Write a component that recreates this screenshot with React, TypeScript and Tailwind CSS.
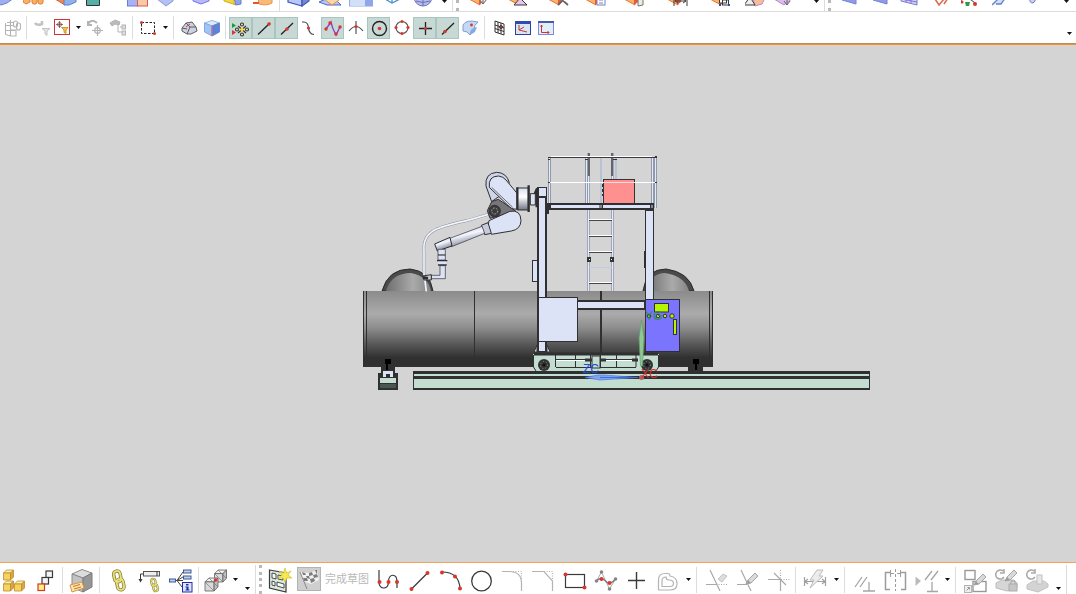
import type { ReactNode } from "react";
import clsx from "clsx";

type Tool = {
  label: string;
  art: ReactNode;
  active?: boolean;
  width?: string;
};

const INK = "#3a3a3c";
const DIM = "#b4b4b4";
const RED = "#d8362f";
const PLATE = "#dde3f7";
const MINT = "#c4ddd1";

function Dot({ x, y, r = 2, fill = RED }: { x: number; y: number; r?: number; fill?: string }) {
  return <circle cx={x} cy={y} r={r} fill={fill} />;
}

type CubeProps = { x: number; y: number; s: number; top: string; left: string; right: string; line: string };

function Cube({ x, y, s, top, left, right, line }: CubeProps) {
  const d = s * 0.3;
  return (
    <g stroke={line} strokeWidth="0.8" strokeLinejoin="round">
      <path d={`M${x} ${y + d}L${x + d} ${y}H${x + s}L${x + s - d} ${y + d}Z`} fill={top} />
      <path d={`M${x} ${y + d}H${x + s - d}V${y + s}H${x}Z`} fill={left} />
      <path d={`M${x + s - d} ${y + d}L${x + s} ${y}V${y + s - d}L${x + s - d} ${y + s}Z`} fill={right} />
    </g>
  );
}

function Chain({ x, y, k = 1 }: { x: number; y: number; k?: number }) {
  return (
    <g transform={`translate(${x} ${y}) scale(${k})`} fill="none">
      <g stroke="#85803a" strokeWidth="3.4">
        <rect x="2" y="2" width="6.500" height="11" rx="3.200" transform="rotate(-12 5 7)" />
        <rect x="5" y="10" width="6.500" height="11" rx="3.200" transform="rotate(-12 8 15)" />
      </g>
      <g stroke="#e9e07a" strokeWidth="1.8">
        <rect x="2" y="2" width="6.500" height="11" rx="3.200" transform="rotate(-12 5 7)" />
        <rect x="5" y="10" width="6.500" height="11" rx="3.200" transform="rotate(-12 8 15)" />
      </g>
    </g>
  );
}

function Pencil({ x, y }: { x: number; y: number }) {
  return (
    <g transform={`translate(${x} ${y})`}>
      <path d="M0 11L2 7L9 0L12 3L5 10Z" fill="#d9d9d9" stroke="#a6a6a6" />
      <path d="M0 11L2 7L5 10Z" fill="#9d9d9d" />
    </g>
  );
}

/* clipped upper row: only the bottom edges of the icons are drawn */

const slab = (extra: ReactNode) => (
  <>
    <path d="M2 -1L13 5V-3H2Z" fill="#fbb55e" stroke="#ea7040" />
    <path d="M12 5L16 2V-2H12Z" fill="#e9573f" />
    {extra}
  </>
);

const sheet = <path d="M5 -4H19V4L5 0Z" fill="#8f9bea" stroke="#7480d8" />;

const upperA: Tool[] = [
  { label: "Extrude", art: <path d="M1 -2H22L15 3L9 5L1 1Z" fill="#9fb0ee" stroke="#6e7cd0" /> },
  {
    label: "Pattern",
    art: (
      <g fill="#f7b268" stroke="#e27a33">
        <path d="M0 -2H7V2L3 4L0 2Z" />
        <rect x="9" y="-3" width="5" height="7" rx="2" />
        <rect x="15" y="-3" width="5" height="7" rx="2" />
      </g>
    ),
  },
  {
    label: "Move face",
    art: (
      <>
        <path d="M1 -1H11V5Z" fill="#f08a4a" stroke="#e0562f" />
        <path d="M10 -2H22V2L15 5H10Z" fill="#8fb2ea" stroke="#5f7fd0" />
      </>
    ),
  },
  { label: "Fill surface", art: <path d="M1.500 -2H14.500V5.500H1.500Z" fill="#57b0a4" stroke="#333" /> },
];

const upperB: Tool[] = [
  {
    label: "Trim body",
    art: (
      <>
        <rect x="1.500" y="-3" width="10" height="9" fill="#a9b2f3" stroke="#6d78dc" />
        <rect x="11.500" y="-3" width="10" height="9" fill="#f7c9a9" stroke="#e2574a" />
      </>
    ),
  },
  { label: "Datum plane", art: <path d="M0 -1L8 -4L16 -3V1L9 6Z" fill="#b3c1f2" stroke="#8a98dd" /> },
  { label: "Sew", art: <path d="M5 -2H21V1L13 4L5 1Z" fill="#b5b9f7" stroke="#7378e6" /> },
  {
    label: "Thicken",
    art: (
      <>
        <path d="M5 -2H15V3L17 5L5 1Z" fill="#f1d83f" stroke="#cfae28" />
        <path d="M15 -2H22V4L17 5Z" fill="#8ea4ea" stroke="#6a7ac8" />
      </>
    ),
  },
  {
    label: "Revolve",
    art: (
      <>
        <path d="M8 -2H22V3Q17 6 9 4Z" fill="#f9b978" stroke="#ea9048" />
        <path d="M3 3H9" stroke="#e0562f" strokeWidth="2" />
      </>
    ),
  },
];

const upperC: Tool[] = [
  {
    label: "Block",
    art: (
      <>
        <path d="M1 -4H15V6L1 2Z" fill="#b7c8f4" stroke="#3f57b8" strokeWidth="1.200" />
        <path d="M15 -4H22V1L15 6Z" fill="#7089d4" stroke="#3f57b8" strokeWidth="1.200" />
      </>
    ),
  },
  {
    label: "Sheet",
    art: (
      <>
        <path d="M1 2L8 -1H17L23 5H9Z" fill="#b4c7f3" stroke="#4c68c0" />
        <path d="M6 -1L14 5L21 0L17 -3Z" fill="#fbd6a6" stroke="#ec9148" />
      </>
    ),
  },
  {
    label: "View layout",
    art: (
      <>
        <rect x="0" y="-3" width="24" height="9.500" fill="#8fa6e8" />
        <rect x="1" y="-3" width="15" height="9" fill="#d3def8" />
      </>
    ),
  },
  { label: "Wireframe", art: <path d="M5 -1L12 3L20 -1M12 -2V3" fill="none" stroke="#4e8fcb" strokeWidth="1.300" /> },
  {
    label: "Sphere",
    art: (
      <>
        <circle cx="12" cy="-3" r="9" fill="#b6bdea" stroke="#6570b8" />
        <path d="M12 -3V6M5 1Q12 4 19 1" fill="none" stroke="#6570b8" />
      </>
    ),
  },
];

const upperD: Tool[] = [
  { label: "Offset face", width: "w-[36px]", art: slab(<path d="M12 -1L16 4L20 -1M16 -3V4" stroke="#666" fill="#eee" />) },
  { label: "Draft", width: "w-[42px]", art: slab(<path d="M8 5L14 -2L21 5Z" fill="#e6c5ee" stroke={INK} />) },
  { label: "Delete face", width: "w-[38px]", art: slab(<path d="M12 5L20 -3M14 -2L22 5" stroke="#666" strokeWidth="1.800" />) },
  {
    label: "Copy face",
    width: "w-[35px]",
    art: slab(
      <>
        <rect x="14" y="-3" width="8" height="8" fill="#fff" stroke="#7581c4" />
        <path d="M16 0H20M16 3H20" stroke="#7581c4" />
      </>
    ),
  },
  { label: "Resize face", width: "w-[43px]", art: slab(<path d="M16 -2H21V5L16 6Z" fill="#e7f0df" stroke="#777" />) },
  {
    label: "Linear dimension",
    width: "w-[43px]",
    art: slab(<path d="M9 -2V6M22 -2V6M10 1H21M13 -1L10 1L13 3M18 -1L21 1L18 3" stroke={INK} fill="none" />),
  },
  {
    label: "Make coplanar",
    width: "w-[43px]",
    art: slab(
      <>
        <rect x="11.500" y="-3" width="7" height="6" fill="#fff" stroke={INK} />
        <rect x="14.500" y="0" width="6" height="5" fill="none" stroke={INK} />
        <path d="M11 4H13V6H11ZM20 4H22V6H20Z" fill="#3a46b8" />
      </>
    ),
  },
  {
    label: "Angular",
    width: "w-[31px]",
    art: (
      <>
        <path d="M8 -2H20L17 4L10 6Z" fill="#f4c091" stroke="#c283dc" />
        <path d="M-1 5L5 -3L10 5Z" fill="#eee" stroke={INK} />
      </>
    ),
  },
  {
    label: "Group face",
    width: "w-[28px]",
    art: (
      <>
        <path d="M0 -1L10 5L19 -2Z" fill="#ddbdec" stroke="#b08ac9" />
        <path d="M10 1L13 5L16 1M13 -3V5" stroke="#666" fill="none" />
      </>
    ),
  },
];

const upperE: Tool[] = [
  { label: "Ruled", art: sheet },
  { label: "Through curves", art: sheet },
  {
    label: "Curve mesh",
    art: (
      <>
        <path d="M2 -4H18V5L2 1Z" fill="#d3d0f4" stroke="#7d77d6" />
        <path d="M7 -3V2M12 -3V3M2 -1L18 2" stroke="#7d77d6" />
      </>
    ),
  },
  { label: "Swept", art: <path d="M5 -1L9 5L14 -1M14 4L18 -2" fill="none" stroke="#dd6a52" strokeWidth="1.600" /> },
  {
    label: "Studio surface",
    art: (
      <>
        <path d="M-1 1Q6 -5 14 3" fill="none" stroke={INK} />
        <path d="M4 2L9 2L8 6L5 6Z" fill="#2c9a46" />
        <Dot x={1} y={2} r={1.500} />
        <Dot x={14} y={4} />
      </>
    ),
  },
  { label: "Section", art: <path d="M0 5L8 -3H14L9 4H4" fill="#d4ddf8" stroke="#5c83cd" strokeWidth="1.300" /> },
  { label: "Bridge", art: <path d="M7 -2Q6 3 10 3Q13 2 12 -2" fill="#ced2ef" stroke="#7076b4" /> },
];

const snapLine = <path d="M4 16.500L16 5" stroke="#222" strokeWidth="1.300" />;

const selA: Tool[] = [
  {
    label: "Menu tree",
    art: (
      <g fill="none" stroke={DIM} strokeWidth="1.100">
        <path d="M2.500 5V16.500M7.500 2V18M2.500 7.500H11M2.500 12.500H12M2.500 16.500L7.500 18H13V12H8M4 4.500H11" />
        <rect x="10.500" y="3" width="4" height="6" rx="2" />
        <rect x="13.500" y="5" width="4" height="7" rx="2" />
      </g>
    ),
  },
];

const selB: Tool[] = [
  {
    label: "Filter back",
    art: (
      <>
        <path d="M3 5Q5 8 10 6V3" fill="none" stroke="#c2c2c2" strokeWidth="2.600" />
        <path d="M10 10.500H18L15 13V17.500L13 16V13Z" fill="#e6e6e6" stroke="#c2c2c2" />
      </>
    ),
  },
];

const selC: Tool[] = [
  {
    label: "Undo selection",
    art: (
      <g fill="none" stroke={DIM} strokeWidth="1.200">
        <path d="M2 3V7H6M2 6Q6 0 11 5" strokeWidth="2" />
        <path d="M11.500 7V18M6 12.500H17" />
        <circle cx="11.500" cy="12.500" r="2.800" />
      </g>
    ),
  },
  {
    label: "Assembly path",
    art: (
      <g fill="#ddd" stroke={DIM}>
        <path d="M1 5L6 2L11 4L10 7L6 6L3 8Z" fill="#bbb" />
        <path d="M9 6V14H13M11 9H13" fill="none" />
        <rect x="13" y="7" width="3.500" height="4" />
        <rect x="13" y="13" width="3.500" height="4" />
      </g>
    ),
  },
];

const snaps: Tool[] = [
  {
    label: "Snap points",
    active: true,
    art: (
      <>
        <path d="M1 5L5 7.500L1 10Z" fill="#14a030" />
        <path d="M1 12L5 14.500L1 17Z" fill={RED} />
        <g stroke="#333" strokeWidth="1.100" fill="#e7e7d0">
          <path d="M7 8L15 15M15 8L7 15" />
          <circle cx="11" cy="6.500" r="1.500" />
          <circle cx="11" cy="16.500" r="1.500" />
          <circle cx="6" cy="11.500" r="1.500" />
          <circle cx="16" cy="11.500" r="1.500" />
        </g>
        <path d="M11 8L12 10.500L14.500 11.500L12 12.500L11 15L10 12.500L7.500 11.500L10 10.500Z" fill="#ffd93d" />
      </>
    ),
  },
  { label: "End point", active: true, art: <>{snapLine}<Dot x={15} y={6} r={1.800} /></> },
  { label: "Mid point", active: true, art: <>{snapLine}<Dot x={10} y={11} r={1.800} /></> },
  {
    label: "Control point",
    art: (
      <>
        <path d="M2 4H4Q8 4 8.500 10Q9 16 14 16.500" fill="none" stroke="#444" strokeWidth="1.200" />
        <Dot x={8.500} y={10} r={1.600} />
      </>
    ),
  },
  {
    label: "Intersection spline",
    active: true,
    art: (
      <>
        <path d="M3 11L8 4Q9 10 13 17L17 9" fill="none" stroke="#8b3fc4" strokeWidth="1.400" />
        <Dot x={3} y={11} r={1.700} />
        <Dot x={7} y={5} r={1.700} />
        <Dot x={13} y={16} r={1.700} />
        <Dot x={17} y={9} r={1.700} />
      </>
    ),
  },
  {
    label: "Intersection point",
    art: (
      <>
        <path d="M3 13Q10 4 17 13M10 3V16" fill="none" stroke="#555" strokeWidth="1.200" />
        <Dot x={10} y={8.500} r={1.600} />
      </>
    ),
  },
  {
    label: "Arc center",
    active: true,
    art: (
      <>
        <circle cx="10.500" cy="10.500" r="7" fill="none" stroke="#222" strokeWidth="1.400" />
        <Dot x={10.500} y={10.500} r={1.800} />
      </>
    ),
  },
  {
    label: "Quadrant point",
    art: (
      <>
        <circle cx="10" cy="9.500" r="6" fill="none" stroke="#555" strokeWidth="1.100" />
        <Dot x={10} y={3.500} r={1.600} />
        <Dot x={10} y={15.500} r={1.600} />
        <Dot x={4} y={9.500} r={1.600} />
        <Dot x={16} y={9.500} r={1.600} />
      </>
    ),
  },
  {
    label: "Existing point",
    active: true,
    art: (
      <>
        <path d="M10.500 4V17M4 10.500H17" stroke="#222" strokeWidth="1.300" />
        <Dot x={10.500} y={10.500} r={1.500} />
      </>
    ),
  },
  { label: "Point on curve", active: true, art: <>{snapLine}<Dot x={7} y={13.500} r={1.800} /></> },
  {
    label: "Point on face",
    art: (
      <>
        <path d="M2 7Q5 1 17 4Q13 7 13 11L9 17Q7 13 2 13Z" fill="#c4d7f3" stroke="#7c9fd4" />
        <path d="M9 17Q8 10 16 9L14 14Z" fill="#88aadf" />
        <Dot x={10.500} y={7} r={1.400} />
      </>
    ),
  },
];

const selD: Tool[] = [
  {
    label: "Grid",
    art: (
      <g stroke="#333" fill="none">
        <path d="M5 3L14 6V17L5 14ZM8 4V15M11 5V16M5 7L14 10M5 10.500L14 13.500" />
        <Dot x={11} y={9} r={1.500} />
      </g>
    ),
  },
  {
    label: "WCS dynamics",
    art: (
      <>
        <rect x="2.500" y="3.500" width="15" height="13" fill="#d7e6f2" stroke="#2e3f9f" />
        <path d="M2 3H18V6H2Z" fill="#3349b0" />
        <path d="M6 7V12L14 14M6 12L11 9" fill="none" stroke="#c33" />
      </>
    ),
  },
  {
    label: "WCS orient",
    art: (
      <>
        <rect x="2.500" y="3.500" width="15" height="13" fill="#e2eef6" stroke="#7c88ea" />
        <path d="M2 3H18V5H2Z" fill="#4a58a8" />
        <path d="M5.500 7V14.500H13M4.500 8.500L5.500 7L6.500 8.500M11.500 13L13 14.500L11.500 16" fill="none" stroke="#c33" />
      </>
    ),
  },
];

const gold = { top: "#fdf0a8", left: "#f6d25e", right: "#dba640", line: "#bd8d2e" };
const steel = { top: "#eeeeee", left: "#dadada", right: "#bdbdbd", line: "#5f5f5f" };

const asmA: Tool[] = [
  {
    label: "Assemblies",
    art: (
      <>
        <Cube x={2.500} y={3} s={10} {...gold} />
        <Cube x={2.500} y={14} s={10} {...gold} />
        <Cube x={13.500} y={14} s={10} {...gold} />
      </>
    ),
  },
  {
    label: "Exploded view",
    art: (
      <g fill="#f4f4f4" stroke={INK} strokeWidth="1.200">
        <rect x="14" y="4" width="6.500" height="6.500" />
        <rect x="10" y="10.500" width="6.500" height="6.500" />
        <rect x="6" y="17" width="6.500" height="6.500" fill="#fff27a" stroke={RED} />
      </g>
    ),
  },
];

const asmB: Tool[] = [
  {
    label: "Part properties",
    art: (
      <>
        <path d="M3 7L13 2.500L23 6L14 11Z" fill="#dcdcdc" stroke="#8c8c8c" />
        <path d="M3 7L14 11V25L3 20Z" fill="#c3c3c3" stroke="#8c8c8c" />
        <path d="M14 11L23 6V20L14 25Z" fill="#969696" stroke="#7b7b7b" />
        <path d="M1 18L13 15L15 21L3 25Z" fill="#fde3ae" stroke="#d9973f" />
        <path d="M4 19.500L11 17.500M5 22L12 20" stroke="#c6792b" />
      </>
    ),
  },
];

const asmC: Tool[] = [
  { label: "Constraints", art: <Chain x={6} y={2} /> },
  {
    label: "Arrangement link",
    art: (
      <>
        <rect x="6.500" y="4.500" width="16" height="4.500" fill="#eee" stroke="#555" />
        <path d="M20 4V9M6 7H3.500V14" fill="none" stroke={INK} />
        <path d="M1.500 12H5.500L3.500 15.500Z" fill={INK} />
        <Chain x={13} y={10.500} k={0.650} />
      </>
    ),
  },
  {
    label: "Relations browser",
    art: (
      <>
        <path d="M7 13.500H9L15 5M9 13.500L15 10M9 13.500L14 20M9 13.500H15" stroke="#444" fill="none" />
        <g fill="#b8cff2" stroke="#44598c">
          <rect x="1.500" y="12" width="6" height="3" />
          <rect x="15.500" y="3" width="7.500" height="3" />
          <rect x="15.500" y="9" width="7.500" height="3" />
        </g>
        <rect x="14.500" y="15.500" width="9.500" height="9.500" fill="#dfe4ff" stroke="#1f2ca8" />
        <path d="M18 17H20.500V18.500H18ZM17.500 19.500H20.500V22.500H21.500V23.500H17.500V22.500H18.500V20.500H17.500Z" fill="#1f2ca8" />
      </>
    ),
  },
];

const asmD: Tool[] = [
  {
    label: "Interference",
    width: "w-[27px]",
    art: (
      <>
        <Cube x={11.500} y={3} s={12} {...steel} />
        <Cube x={2} y={11} s={13} {...steel} />
        <path d="M2 15L11 24M6 11L15 20M12 7L20 15M15 3L23 11" stroke="#777" strokeWidth="0.700" />
        <Dot x={12.500} y={13} r={1.800} />
      </>
    ),
  },
];

const sketchIcon: Tool[] = [
  {
    label: "Sketch",
    art: (
      <>
        <path d="M2.500 3L19 6V25L2.500 21Z" fill="#dce9dd" stroke={INK} strokeWidth="1.200" />
        <path
          d="M5 6L9 7V12L5 11ZM11 8L16 9V13L11 12ZM5 14L8 15V19L5 18ZM10 15L17 17V21L10 19Z"
          fill="#f5faf5"
          stroke={INK}
          strokeWidth="0.900"
        />
        <path
          d="M18 1L19.500 6L24 4L21 8L25 11L20 11L18 15L16 11L11 11L15 8L12 4L16.500 6Z"
          fill="#f6e84e"
          stroke="#c9b92e"
          strokeWidth="0.600"
        />
      </>
    ),
  },
];

const curves: Tool[] = [
  {
    label: "Profile",
    art: (
      <>
        <path d="M4 3V15C4 23 13.500 23 13.500 15C13.500 6 22 6 22 15V21" fill="none" stroke={INK} strokeWidth="1.200" />
        <Dot x={4.500} y={15} />
        <Dot x={13.500} y={15} />
        <Dot x={22} y={15} />
      </>
    ),
  },
  {
    label: "Line",
    art: (
      <>
        <path d="M5.500 22L21.500 6" stroke={INK} strokeWidth="1.200" />
        <Dot x={5.500} y={22} />
        <Dot x={21.500} y={6} />
      </>
    ),
  },
  {
    label: "Arc",
    art: (
      <>
        <path d="M5 5Q22 5 23 21.500" fill="none" stroke={INK} strokeWidth="1.200" />
        <Dot x={5} y={5.500} />
        <Dot x={18} y={9.500} />
        <Dot x={23} y={21.500} />
      </>
    ),
  },
  { label: "Circle", art: <circle cx="13.500" cy="14" r="9.800" fill="none" stroke={INK} strokeWidth="1.300" /> },
  {
    label: "Fillet",
    art: (
      <g fill="none" stroke={DIM} strokeWidth="1.200">
        <path d="M3 4.500H10Q22.500 4.500 22.500 16V24" />
        <path d="M14 4.500H22.500V12" strokeDasharray="1 1.500" />
      </g>
    ),
  },
  {
    label: "Chamfer",
    art: (
      <g fill="none" stroke={DIM} strokeWidth="1.200">
        <path d="M2 4.500H14L22.500 14V24" />
        <path d="M14 4.500H22.500V12" strokeDasharray="1 1.500" />
      </g>
    ),
  },
  {
    label: "Rectangle",
    art: (
      <>
        <rect x="4.500" y="7.500" width="19" height="13" fill="none" stroke={INK} strokeWidth="1.200" />
        <Dot x={4.500} y={7.500} />
        <Dot x={23.500} y={20.500} />
      </>
    ),
  },
  {
    label: "Studio spline",
    art: (
      <>
        <path d="M4.500 14L9.500 5L17.500 22L23.500 12" fill="none" stroke="#aaa" />
        <path d="M4.500 14Q9 9 13.500 14T23.500 12" fill="none" stroke="#777" strokeWidth="1.300" />
        <Dot x={4.500} y={14} r={1.800} fill="#858585" />
        <Dot x={9.500} y={5} r={1.800} fill="#858585" />
        <Dot x={17.500} y={22} r={1.800} fill="#858585" />
        <Dot x={23.500} y={12} r={1.800} fill="#858585" />
        <Dot x={9.500} y={12} />
        <Dot x={17.500} y={16} />
      </>
    ),
  },
  { label: "Point", art: <path d="M13.500 5V22M5 13.500H22" stroke={INK} strokeWidth="1.400" /> },
  {
    label: "Offset curve",
    art: (
      <g fill="none" stroke={DIM} strokeWidth="1.200">
        <path d="M4.500 23V13Q4.500 6.500 11 6.500H14Q16 6.500 16 9Q23 10 23 17Q23 23 16 23Z" />
        <path d="M8 19.500V14Q8 10 12 10Q12 13 15 13Q19.500 13 19.500 16.500Q19.500 19.500 16 19.500Z" />
      </g>
    ),
  },
];

const trims: Tool[] = [
  {
    label: "Quick trim",
    art: (
      <>
        <path d="M7 3L17 24M3 17.500H13" stroke="#a9a9a9" strokeWidth="1.200" />
        <path d="M13 17.500H24" stroke="#a9a9a9" strokeDasharray="1 1.500" />
        <path d="M15 12L20 7L24 9L19 15Z" fill="#ddd" stroke="#c4c4c4" />
      </>
    ),
  },
  {
    label: "Quick extend",
    art: (
      <>
        <path d="M7 3L17 24M3 17.500H13" stroke="#a9a9a9" strokeWidth="1.200" />
        <Pencil x={12} y={6} />
      </>
    ),
  },
  {
    label: "Make corner",
    art: (
      <>
        <path d="M3 12.500H15.500V24M9 6L21 18" fill="none" stroke="#a9a9a9" strokeWidth="1.200" />
        <path d="M15.500 3V12.500H25" fill="none" stroke="#a9a9a9" strokeDasharray="1 1.500" />
      </>
    ),
  },
];

const dims: Tool[] = [
  {
    label: "Rapid dimension",
    art: (
      <>
        <path
          d="M2.500 10V19M23.500 10V19M3 14.500H24M6 12L3 14.500L6 17M20 12L23 14.500L20 17"
          fill="none"
          stroke="#a0a0a0"
          strokeWidth="1.200"
        />
        <path d="M15 3H21L17 9H21L8 21L12 13H8Z" fill="#ececec" stroke="#bcbcbc" />
      </>
    ),
  },
];

const geo: Tool[] = [
  {
    label: "Geometric constraints",
    art: <path d="M4 20L11 10M9 20L16 10M18 15V24M12 24H24" fill="none" stroke="#a5a5a5" strokeWidth="1.300" />,
  },
  {
    label: "Make symmetric",
    art: (
      <g fill="none" stroke="#9c9c9c">
        <path d="M8 5.500H3.500V22.500H8M19 5.500H23.500V22.500H19" strokeWidth="1.500" />
        <path d="M13.500 2V24" strokeDasharray="3 2" />
        <path d="M8.500 3V10M18.500 3V10M8.500 6.500H12M18.500 6.500H15" />
      </g>
    ),
  },
  {
    label: "Show constraints",
    art: (
      <>
        <path d="M2.500 9.500L8 14L2.500 19Z" fill="#bbb" />
        <path d="M12 13L19 4M18 13L25 4M19 15V24.500M14 24.500H25" fill="none" stroke="#a5a5a5" strokeWidth="1.300" />
      </>
    ),
  },
];

const edits: Tool[] = [
  {
    label: "Convert reference",
    art: (
      <>
        <rect x="3" y="3.500" width="10" height="9" fill="none" stroke="#999" strokeWidth="1.400" />
        <rect x="11" y="14.500" width="13" height="10" fill="none" stroke="#999" strokeWidth="1.400" />
        <rect x="2.500" y="18.500" width="7" height="7" fill="#eee" stroke={DIM} />
        <path d="M4.500 23.500L7.500 20.500M5.500 20.500H7.500V22.500" stroke="#999" fill="none" />
        <Pencil x={12} y={7} />
      </>
    ),
  },
  {
    label: "Edit defining section",
    art: (
      <>
        <path d="M3 16L9 13H21L24 16V21L14 24L3 21Z" fill="#d6d6d6" stroke="#bdbdbd" />
        <path d="M10 4A4.500 4.500 0 1 0 11 10M11 2V6H7" fill="none" stroke="#ababab" strokeWidth="1.600" />
        <Pencil x={12} y={3} />
        <rect x="16" y="17" width="8" height="7" fill="#c6c6c6" stroke="#adadad" />
        <path d="M18 17V14H22V17" fill="none" stroke="#a5a5a5" />
      </>
    ),
  },
  {
    label: "Update model",
    art: (
      <>
        <path d="M3 18L9 14H20L24 17V20L14 25L3 22Z" fill="#d3d3d3" stroke="#c2c2c2" />
        <rect x="13" y="8" width="5" height="9" fill="#e6e6e6" stroke="#c2c2c2" />
        <path d="M10 4A4.500 4.500 0 1 0 11 10M11 2V6H7" fill="none" stroke="#ababab" strokeWidth="1.600" />
      </>
    ),
  },
];

function Sep() {
  return <div className="mr-[3px] ml-[2px] w-px shrink-0 self-stretch bg-[#dcdcdc]" />;
}

function Grip() {
  return <div className="mr-[2px] w-[3px] shrink-0 self-stretch border-l-[3px] border-dotted border-[#b8b8b8]" />;
}

function Caret({ label, className }: { label: string; className?: string }) {
  return (
    <button aria-label={label} className={clsx("flex w-3 shrink-0 items-center justify-center", className)}>
      <svg width="5" height="3" viewBox="0 0 5 3">
        <path d="M0 0H5L2.500 3Z" fill="#111" />
      </svg>
    </button>
  );
}

function UpperTools({ tools }: { tools: Tool[] }) {
  return tools.map((tool) => (
    <button key={tool.label} aria-label={tool.label} className={clsx("flex shrink-0 justify-center", tool.width ?? "w-[31px]")}>
      <svg width="24" height="7" viewBox="0 0 24 7">{tool.art}</svg>
    </button>
  ));
}

function SnapTools({ tools }: { tools: Tool[] }) {
  return tools.map((tool) => (
    <button
      key={tool.label}
      aria-label={tool.label}
      aria-pressed={tool.active}
      className={clsx(
        "flex h-[22px] w-[23px] shrink-0 items-center justify-center",
        tool.active && "border border-[#a9c5bf] bg-[#c8d8d5]"
      )}
    >
      <svg className="shrink-0" width="20" height="20" viewBox="0 0 20 20">{tool.art}</svg>
    </button>
  ));
}

function BottomTools({ tools }: { tools: Tool[] }) {
  return tools.map((tool) => (
    <button key={tool.label} aria-label={tool.label} className={clsx("flex shrink-0 justify-center", tool.width ?? "w-[31px]")}>
      <svg className="shrink-0" width="26" height="26" viewBox="0 0 26 26">{tool.art}</svg>
    </button>
  ));
}

function Robot() {
  return (
    <g transform="translate(350 150) scale(.33333)" stroke="#2e2e30" strokeWidth="3" strokeLinejoin="round">
      <path d="M229 424L222 370V300Q218 255 262 236Q300 222 350 212L415 193" fill="none" stroke="#8b8f9c" strokeWidth="8" />
      <path d="M229 424L222 370V300Q218 255 262 236Q300 222 350 212L415 193" fill="none" stroke="#f1f4fd" strokeWidth="5" />
      {/* shoulder and upper arm */}
      <path d="M425 155L408 108Q404 70 440 67Q470 68 478 98L460 130Z" fill="#cfd5e8" />
      <path d="M418 112Q414 78 446 78Q460 80 468 90L503 132V178L484 176Z" fill={PLATE} />
      <path d="M425 112L488 172" fill="none" strokeWidth="2" />
      <path d="M425 155L445 148L498 184L420 205L412 182Z" fill="#77777b" />
      <circle cx="434" cy="183" r="17" fill="#3b3b3d" />
      <circle cx="434" cy="183" r="9" fill="none" stroke="#a8a8ac" strokeDasharray="5 4" />
      <path d="M417 212L480 184Q512 178 513 212Q512 238 484 243L424 253L412 240Z" fill={PLATE} />
      <path d="M394 226L414 218L424 250L404 254Z" fill="#c6ccde" />
      <path d="M300 265L396 229L404 250L305 290Z" fill="url(#tube)" strokeWidth="2" />
      <path d="M254 282L300 262L306 288L262 303Z" fill="url(#tube)" />
      <path d="M264 298H286V315H264ZM264 315H286V330H264Z" fill={PLATE} strokeWidth="2" />
      <path d="M270 347H286V386H244V376H270Z" fill={PLATE} strokeWidth="2" />
      <path d="M264 332H288V346H266Z" fill={PLATE} stroke="none" />
      <path d="M261 332H292M264 345H290" strokeWidth="4" />
      <path d="M218 378L244 374V390L222 390Z" fill="#c6cbda" />
      <path d="M219 382L234 385" strokeWidth="8" />
      {/* base flange */}
      <path d="M502 114H535V180H502Z" fill="url(#flange)" />
      <path d="M502 112V178M536 106V186" strokeWidth="7" />
      <path d="M541 131H556V165H541Z" fill={PLATE} />
      <path d="M554 132L560 118V172" strokeWidth="7" fill="none" />
    </g>
  );
}

function Platform() {
  return (
    <g shapeRendering="crispEdges">
      {/* ladder */}
      <path d="M588.500 153V291M612.500 153V291" stroke="#9fa6b8" strokeWidth="3" />
      <path d="M588.500 176V291M612.500 176V291" stroke="#e3eaf9" strokeWidth="1" />
      <path d="M589 153V176M612 153V176" stroke="#66666a" strokeWidth="2" />
      <path d="M589 220.500H612M589 236.500H612M589 252.500H612M589 283.500H612" stroke="#45454a" />
      <path d="M589 219.500H612M589 235.500H612M589 251.500H612M589 282.500H612" stroke="#fff" />
      <path d="M589 267.500H612" stroke="#c3cbe0" />
      <path d="M587 257H591V262H587ZM610 257H614V262H610Z" fill="#333" />
      <path d="M589 259H590V260H589ZM611 259H612V260H611Z" fill="#fff" />
      {/* railing */}
      <path d="M549.500 157V204M586.500 157V204M652.500 157V204M655.500 157V208" stroke="#9299aa" strokeWidth="3" />
      <path d="M601 157V204M615.500 157V180" stroke="#b9c1d4" strokeWidth="2" />
      <path d="M549.500 157V204M586.500 157V204M652.500 157V204M655.500 157V208" stroke="#e3eaf9" strokeWidth="1" />
      <path d="M549 157.500H656" stroke="#3a3a3c" />
      <path d="M551 156.500H652M549 182.500H656" stroke="#fff" />
      <path d="M548 157H550V158H548ZM548 182H550V183H548ZM655 156H657V158H655ZM655 182H657V183H655ZM548 159H550V160H548ZM585 159H588V160H585ZM613 159H617V160H613Z" fill="#333" />
      <rect x="603.500" y="179.500" width="31" height="25" fill="#ff9090" stroke="#333" />
      <path d="M603 182.500H635" stroke="#f8dada" />
      <path d="M602 184V196" stroke="#333" strokeDasharray="3 2" />
      {/* deck and frame */}
      <rect x="547" y="203" width="107" height="7" fill="#303032" />
      <rect x="551" y="205" width="48" height="3" fill={PLATE} />
      <rect x="603" y="205" width="47" height="3" fill={PLATE} />
      <path d="M599 205H602V208H599ZM651 205H653V208H651Z" fill="#888" />
      <rect x="645" y="210" width="9" height="90" fill="#303032" />
      <rect x="644" y="251" width="1" height="17" fill="#303032" />
      <rect x="646" y="211" width="7" height="89" fill={PLATE} />
      <rect x="532.500" y="260.500" width="6" height="21" fill={PLATE} stroke="#333" />
      <rect x="537" y="187" width="10" height="165" fill="#303032" />
      <rect x="539" y="188" width="7" height="8" fill={PLATE} />
      <rect x="539" y="198" width="6" height="153" fill={PLATE} />
      <path d="M547 207H549V214H547Z" fill="#303032" />
      <rect x="577" y="300" width="70" height="10" fill="#303032" />
      <rect x="577" y="302" width="67" height="6" fill={PLATE} />
      <rect x="538.500" y="297.500" width="39" height="44" fill={PLATE} stroke="#303032" />
    </g>
  );
}

function Carriage() {
  return (
    <g>
      <path d="M533 354H659V367L656 371H536L533 367Z" fill={MINT} />
      <path d="M534 352.500H658V355.500H534Z" fill="#303032" />
      <path d="M556 367.500H636" stroke="#303032" />
      <path
        d="M555.500 355V367M575.500 355V367M590.500 355V367M600.500 355V367M616.500 355V367M636 355V367M533.500 355V367L536 371M658.500 355V367L656 371"
        fill="none"
        stroke="#303032"
      />
      <path d="M556 359.500H590M601 359.500H636" stroke="#333" />
      <path d="M556 360.500H590M601 360.500H636" stroke="#fff" />
      <path d="M585 360H592M600 360H606M632 360H638" stroke="#333" strokeWidth="3" />
      <rect x="592" y="356" width="8" height="12" fill={MINT} stroke="#333" />
      {[544, 647].map((x) => (
        <g key={x}>
          <circle cx={x} cy="365" r="6" fill="#333" />
          <circle cx={x} cy="365" r="3.500" fill="none" stroke="#8f9d96" strokeDasharray="1 2" />
          <circle cx={x} cy="365" r="1.500" fill="#111" />
        </g>
      ))}
      <path d="M534 352L537 345V352ZM547 345L550 352H547Z" fill={PLATE} stroke="#333" />
    </g>
  );
}

function ControlCabinet() {
  return (
    <g stroke="#303032">
      <rect x="645.500" y="299.500" width="34" height="52" fill="#7b74ff" />
      <rect x="654.500" y="303.500" width="14" height="8.500" fill="#b6f400" />
      <rect x="673.500" y="319.500" width="3" height="15" fill="#b6f400" />
      <g fill="#b6f400">
        <circle cx="649" cy="316" r="1.800" />
        <circle cx="658" cy="316" r="1.800" />
        <circle cx="665" cy="316" r="1.800" />
        <circle cx="672" cy="316" r="2.200" />
      </g>
    </g>
  );
}

function Axes() {
  return (
    <g fontFamily="Liberation Sans, Arial, sans-serif" fontSize="12">
      <path d="M641.500 320L644 338L642.500 366H640.500L639 338Z" fill="#8fc796" stroke="#5f9f68" strokeWidth="0.700" />
      <path d="M585 377.500L598 375H604L637 377.500L600 380Z" fill="#7fa3ee" stroke="#4a78e0" strokeWidth="0.700" />
      <path d="M600 377.500H638" stroke="#3f6de0" />
      <circle cx="641.500" cy="377.500" r="2.500" fill="#b5605e" />
      <text x="645" y="320" fill="#2f8f49">YG</text>
      <text x="583" y="373" fill="#1a49e0">ZC</text>
      <text x="641" y="378" fill="#d22c2c">XC</text>
    </g>
  );
}

function Viewport() {
  return (
    <main className="flex min-h-0 flex-1 bg-[#d4d4d4]">
      <svg className="h-full w-full" viewBox="0 45 1076 517" role="img" aria-label="Welding station assembly">
        <defs>
          <linearGradient id="pipe" x1="0" y1="0" x2="0" y2="1">
            <stop offset="0" stopColor="#8b8b8b" />
            <stop offset=".3" stopColor="#ababab" />
            <stop offset=".48" stopColor="#8e8e8e" />
            <stop offset=".68" stopColor="#5c5c5c" />
            <stop offset=".88" stopColor="#303030" />
          </linearGradient>
          <linearGradient id="dome">
            <stop offset="0" stopColor="#6e6e6e" />
            <stop offset=".6" stopColor="#aaaaaa" />
            <stop offset="1" stopColor="#858585" />
          </linearGradient>
          <linearGradient id="tube" x1="0" y1="0" x2=".4" y2="1">
            <stop offset=".2" stopColor="#c4cada" />
            <stop offset=".5" stopColor="#f4f6ff" />
            <stop offset=".9" stopColor="#8d93a3" />
          </linearGradient>
          <linearGradient id="flange" x1="0" y1="0" x2="0" y2="1">
            <stop offset="0" stopColor="#d8def0" />
            <stop offset=".4" stopColor="#ffffff" />
            <stop offset="1" stopColor="#6f7585" />
          </linearGradient>
        </defs>

        <path d="M382 291Q388 269 410 269Q430 271 433 291Z" fill="#4a4a4a" stroke="#2b2b2b" />
        <path d="M386 291Q391 273 411 273Q428 276 431 291Z" fill="url(#dome)" />
        <path d="M643 291Q646 269 666 269Q689 272 694 291Z" fill="#4a4a4a" stroke="#2b2b2b" />
        <path d="M647 291Q650 273 665 273Q685 276 689 291Z" fill="url(#dome)" />

        <g shapeRendering="crispEdges">
          <rect x="363" y="291" width="350" height="76" fill="url(#pipe)" />
          <path d="M363.500 291V367M366.500 291V367M474.500 291V367M709.500 291V367M712.500 291V367" stroke="#303030" />
          <path d="M601 291V367" stroke="#303030" strokeWidth="2" />
          {/* pipe supports */}
          <path d="M381 367H395V375H381ZM688 367H703V371H688Z" fill="#303030" />
          <path d="M385 359H391V364H385ZM693 359H699V364H693ZM386 364H388V370H386ZM695 364H697V370H695Z" fill="#000" />
          <rect x="378" y="373" width="20" height="17" fill="#303032" />
          <rect x="383" y="371" width="10" height="6" fill={PLATE} />
          <path d="M386 374H390V377H386Z" fill="#303032" />
          <rect x="380" y="378" width="16" height="5" fill={MINT} />
          <rect x="380" y="384" width="16" height="4" fill="#4c5650" />
          {/* rail */}
          <rect x="413" y="371" width="457" height="19" fill="#303032" />
          <rect x="414" y="374" width="455" height="2" fill={MINT} />
          <rect x="414" y="379" width="455" height="9" fill={MINT} />
        </g>

        <Platform />
        <Carriage />
        <Robot />
        <ControlCabinet />
        <Axes />
      </svg>
    </main>
  );
}

export default function App() {
  return (
    <div className="flex h-screen flex-col overflow-hidden bg-white font-['Liberation_Sans','Noto_Sans_CJK_SC',sans-serif]">
      <header className="shrink-0 border-b border-[#f9922c] bg-white">
        <div className="flex h-3 items-start overflow-hidden border-b border-[#dcdcdc]">
          <div className="-ml-3 flex">
            <UpperTools tools={upperA} />
          </div>
          <div className="ml-2.5 flex">
            <UpperTools tools={upperB} />
          </div>
          <Sep />
          <UpperTools tools={upperC} />
          <Caret label="More views" />
          <Sep />
          <Grip />
          <UpperTools tools={upperD} />
          <Caret label="More synchronous tools" className="ml-2.5" />
          <Sep />
          <Grip />
          <UpperTools tools={upperE} />
          <Caret label="More surface tools" className="mr-1 ml-auto" />
        </div>

        <div className="flex h-8 items-center border-b border-[#b98a5c] py-1 pl-px">
          <SnapTools tools={selA} />
          <Sep />
          <SnapTools tools={selB} />
          <button aria-label="Type filter" className="flex w-[19px] shrink-0 justify-center">
            <svg width="17" height="17" viewBox="0 0 17 17">
              <rect x=".5" y=".5" width="15" height="15" fill="#fff" stroke="#d0333a" />
              <path d="M5.500 2V9M2 5.500H9" stroke="#555" strokeWidth=".8" />
              <circle cx="5.500" cy="5.500" r="2" fill="none" stroke="#a33" strokeWidth=".8" />
              <path d="M7.500 8.500H14L12 11V14.500L10 13.500V11Z" fill="#f5c542" stroke="#b98a1e" strokeWidth=".8" />
            </svg>
          </button>
          <Caret label="Filter options" />
          <SnapTools tools={selC} />
          <Sep />
          <button aria-label="Rectangle select" className="flex w-[23px] shrink-0 justify-center">
            <svg width="18" height="18" viewBox="0 0 18 18">
              <rect x="2.500" y="3.500" width="13" height="11" fill="none" stroke="#222" strokeDasharray="2.500 1.500" />
              <Dot x={2.500} y={3.500} r={1.500} />
              <Dot x={15.500} y={14.500} r={1.500} />
            </svg>
          </button>
          <Caret label="Selection shapes" />
          <Sep />
          <button aria-label="Shaded edges" className="flex w-[23px] shrink-0 justify-center">
            <svg width="18" height="18" viewBox="0 0 18 18">
              <path d="M2 9L6 4L12 3L16 8L17 12L11 15L7 15L2 12Z" fill="#cdd3de" stroke="#5c5c66" />
              <path d="M6 4L10 8L16 8M10 8L7 15M2 9L7 10" fill="none" stroke="#5c5c66" />
              <path d="M6 8L10 5" stroke="#d33" />
            </svg>
          </button>
          <button aria-label="Shaded body" className="flex w-[23px] shrink-0 justify-center">
            <svg width="18" height="18" viewBox="0 0 18 18">
              <path d="M1.500 4L9 1.500L16.500 4L9 7Z" fill="#dceefd" stroke="#9ab3e2" />
              <path d="M1.500 4L9 7V17L1.500 13Z" fill="#9cc6f5" stroke="#8aa5e4" />
              <path d="M16.500 4L9 7V17L16.500 13Z" fill="#5a83dc" stroke="#6f83d0" />
              <path d="M9 7V17" stroke="#e06a7a" />
            </svg>
          </button>
          <Sep />
          <SnapTools tools={snaps} />
          <Sep />
          <SnapTools tools={selD} />
          <Caret label="Toolbar options" className="mr-px ml-auto self-end pb-1" />
        </div>
      </header>

      <Viewport />

      <footer className="flex h-8 shrink-0 items-center border-t border-[#f3a355] bg-white pt-0.5">
        <div className="-ml-0.5 flex shrink-0">
          <BottomTools tools={asmA} />
        </div>
        <div className="flex h-[26px] shrink-0 items-center">
          <Sep />
          <BottomTools tools={asmB} />
          <Sep />
          <BottomTools tools={asmC} />
          <Sep />
          <BottomTools tools={asmD} />
          <Caret label="Clearance options" />
        </div>
        <Caret label="Assembly options" className="mb-1 self-end" />
        <Sep />
        <Grip />
        <BottomTools tools={sketchIcon} />
        <button disabled className="flex shrink-0 items-center gap-[3px] pl-0.5 text-[11px] whitespace-nowrap text-[#b9b9b9]">
          <svg width="25" height="25" viewBox="0 0 25 25">
            <rect x=".5" y=".5" width="23" height="23" fill="#cfcfcf" stroke="#b3b3b3" />
            <path d="M3 5L12 6L20 3L22 13L14 17L6 14Z" fill="#f2f2f2" />
            <path
              d="M5 5L8 6L9 8H6ZM12 6L15 5L16 8L12 9ZM9 9L12 9L13 12L10 11ZM16 8L20 7L21 10L17 11ZM6 11L10 11L11 14L7 14ZM13 12L17 11L18 14L14 16ZM18 3L20 3L20 7L19 6Z"
              fill="#7d7d7d"
            />
            <path d="M3 5L10 22" stroke="#888" />
          </svg>
          完成草图
        </button>
        <div className="ml-[3px] flex h-[26px] shrink-0 items-center">
          <BottomTools tools={curves} />
          <Caret label="More curves" />
          <Sep />
          <BottomTools tools={trims} />
          <Sep />
          <BottomTools tools={dims} />
          <Caret label="Dimension types" />
          <Sep />
          <BottomTools tools={geo} />
          <Caret label="Constraint options" />
          <Sep />
          <BottomTools tools={edits} />
        </div>
        <Caret label="Sketch toolbar options" className="mb-1 self-end" />
        <Sep />
      </footer>
    </div>
  );
}
